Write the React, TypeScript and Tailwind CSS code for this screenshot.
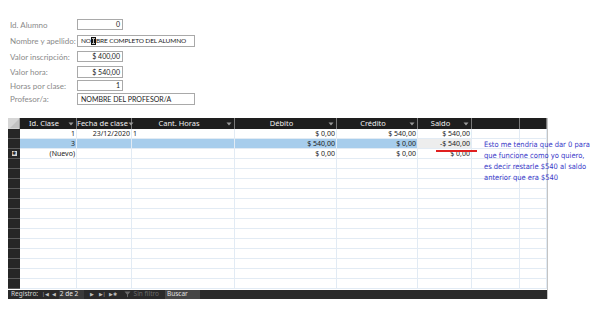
import React from "react";

const F = { fontFamily: '"Noto Sans", "Open Sans", sans-serif' };
const FL = { fontFamily: 'Lato, "Noto Sans", sans-serif' };

const cols = [57, 55, 103, 102, 81, 54, 48, 27];

function Arrow() {
  return (
    <svg width="6" height="4" viewBox="0 0 6 4" className="shrink-0">
      <path d="M0.5 0.5 H5.5 L3 3.5 Z" fill="#9a9a9a" />
    </svg>
  );
}

function FieldRow({
  label,
  value,
  w,
  h,
  mt,
  align,
  cursor,
}: {
  label: string;
  value: string;
  w: number;
  h: number;
  mt: number;
  align: "left" | "right";
  cursor?: boolean;
}) {
  return (
    <div className="flex items-center" style={{ marginTop: mt, ...FL }}>
      <div className="w-[77px] shrink-0 pl-[10px] text-[8px] text-[#8a8a8a] leading-none whitespace-nowrap">
        {label}
      </div>
      <div
        className={`shrink-0 border border-[#a9a9a9] bg-white flex items-center text-[7px] text-[#1a1a1a] leading-none whitespace-nowrap ${
          align === "right" ? "justify-end pr-[2px]" : "justify-start pl-[3px]"
        }`}
        style={{ width: w, height: h }}
      >
        {cursor ? (
          <span className="text-[6.5px] tracking-[-0.1px]">
            NO
            <span className="inline-block relative align-middle bg-[#111] w-[5px] h-[8px] -mt-[1px]">
              <span className="absolute left-[2px] top-[1px] w-[1px] h-[6px] bg-[#bbb]"></span>
              <span className="absolute left-[1px] top-[1px] w-[3px] h-[1px] bg-[#bbb]"></span>
              <span className="absolute left-[1px] top-[6px] w-[3px] h-[1px] bg-[#bbb]"></span>
            </span>
            BRE COMPLETO DEL ALUMNO
          </span>
        ) : (
          value
        )}
      </div>
    </div>
  );
}

type Cell = { t?: string; a?: "l" | "r"; bg?: string };

function BodyRow({ cells, bg, selector }: { cells: Cell[]; bg?: string; selector?: "new" }) {
  return (
    <div className="flex h-[10px]">
      <div className="w-[12px] shrink-0 h-[10px] bg-[#262626] border-b border-[#5a5a5a] flex items-center justify-center">
        {selector === "new" ? (
          <div className="w-[5px] h-[5px] bg-[#d8d8d8] flex items-center justify-center text-[5px] leading-none text-[#222]">
            ✱
          </div>
        ) : null}
      </div>
      {cols.map((w, i) => {
        const c = cells[i] || {};
        const cellBg = c.bg ?? (i < 6 ? bg : undefined);
        return (
          <div
            key={i}
            className={`shrink-0 h-[10px] border-r border-b border-[#e2ebf4] flex items-center text-[7px] leading-none text-[#1c1c1c] px-[1px] whitespace-nowrap ${
              c.a === "l" ? "justify-start" : "justify-end"
            }`}
            style={{ width: w, background: cellBg }}
          >
            {c.t}
          </div>
        );
      })}
    </div>
  );
}

export default function App() {
  const headers = ["Id. Clase", "Fecha de clase", "Cant. Horas", "Débito", "Crédito", "Saldo", "", ""];
  const empty = Array.from({ length: 13 });
  return (
    <div className="w-[600px] h-[333px] bg-white relative overflow-hidden" style={F}>
      <div className="pt-[19px]">
        <FieldRow label="Id. Alumno" value="0" w={46} h={11} mt={0} align="right" />
        <FieldRow label="Nombre y apellido:" value="" w={118} h={12} mt={5} align="left" cursor />
        <FieldRow label="Valor inscripción:" value="$ 400,00" w={46} h={11} mt={4} align="right" />
        <FieldRow label="Valor hora:" value="$ 540,00" w={46} h={12} mt={4} align="right" />
        <FieldRow label="Horas por clase:" value="1" w={46} h={11} mt={2} align="right" />
        <FieldRow label="Profesor/a:" value="NOMBRE DEL PROFESOR/A" w={118} h={12} mt={2} align="left" />
      </div>

      <div className="ml-[8px] mt-[13px] w-[540px] border-r border-[#c4c4c4]">
        {/* header */}
        <div className="flex h-[11px] bg-[#1e1e1e]">
          <div className="w-[12px] shrink-0 bg-[#d6d6d6] border-r border-[#9a9a9a] relative">
            <svg width="12" height="11" className="absolute inset-0">
              <path d="M2 10 L11 1 L11 10 Z" fill="#c2c2c2" />
            </svg>
          </div>
          {cols.map((w, i) => (
            <div
              key={i}
              className="shrink-0 flex items-center border-r border-[#7a7a7a] pr-[2px]"
              style={{ width: w }}
            >
              <span className="flex-1 text-center text-[7.5px] leading-none text-[#f0f0f0] whitespace-nowrap">
                {headers[i]}
              </span>
              {i < 6 ? <Arrow /> : null}
            </div>
          ))}
        </div>
        <BodyRow
          cells={[
            { t: "1" },
            { t: "23/12/2020" },
            { t: "1", a: "l" },
            { t: "$ 0,00" },
            { t: "$ 540,00" },
            { t: "$ 540,00" },
          ]}
        />
        <BodyRow
          bg="#a7cdec"
          cells={[
            { t: "3" },
            {},
            {},
            { t: "$ 540,00" },
            { t: "$ 0,00" },
            { t: "-$ 540,00", bg: "#ededed" },
          ]}
        />
        <BodyRow
          selector="new"
          cells={[{ t: "(Nuevo)" }, {}, {}, { t: "$ 0,00" }, { t: "$ 0,00" }, { t: "$ 0,00" }]}
        />
        {empty.map((_, i) => (
          <BodyRow key={i} cells={[]} />
        ))}
        {/* footer */}
        <div className="flex items-center h-[9px] mt-[1px] bg-[#2a2a2a] text-[6.5px] leading-none text-[#d8d8d8] whitespace-nowrap">
          <span className="ml-[3px]">Registro:</span>
          <span className="ml-[4px] text-[5px] text-[#bdbdbd]">|◀</span>
          <span className="ml-[3px] text-[5px] text-[#bdbdbd]">◀</span>
          <span className="ml-[3px] h-[9px] w-[25px] bg-[#3a3a3a] flex items-center pl-[1px] text-[#e8e8e8]">2 de 2</span>
          <span className="ml-[6px] text-[5px] text-[#bdbdbd]">▶</span>
          <span className="ml-[5px] text-[5px] text-[#bdbdbd]">▶|</span>
          <span className="ml-[3px] text-[5px] text-[#bdbdbd]">▶✱</span>
          <svg width="7" height="7" viewBox="0 0 7 7" className="ml-[7px]">
            <path d="M0.5 0.5 H6.5 L4 3.5 V6.5 L3 5.5 V3.5 Z" fill="#6a6a6a" />
          </svg>
          <span className="ml-[3px] text-[#6c6c6c]">Sin filtro</span>
          <span className="ml-[6px] h-[9px] w-[35px] bg-[#464646] flex items-center pl-[2px] text-[#e0e0e0]">
            Buscar
          </span>
        </div>
      </div>

      {/* red underline */}
      <div className="absolute left-[436px] top-[150px] w-[41px] h-[1.5px] bg-[#e02020]"></div>

      {/* annotation */}
      <div
        className="absolute left-[484px] top-[139px] text-[7.5px] leading-[11px] text-[#3838c8] whitespace-nowrap"
        style={{ fontFamily: '"DejaVu Sans Condensed", "Noto Sans", sans-serif' }}
      >
        <div>Esto me tendria que dar 0 para</div>
        <div>que funcione como yo quiero,</div>
        <div>es decir restarle $540 al saldo</div>
        <div>anterior que era $540</div>
      </div>
    </div>
  );
}
